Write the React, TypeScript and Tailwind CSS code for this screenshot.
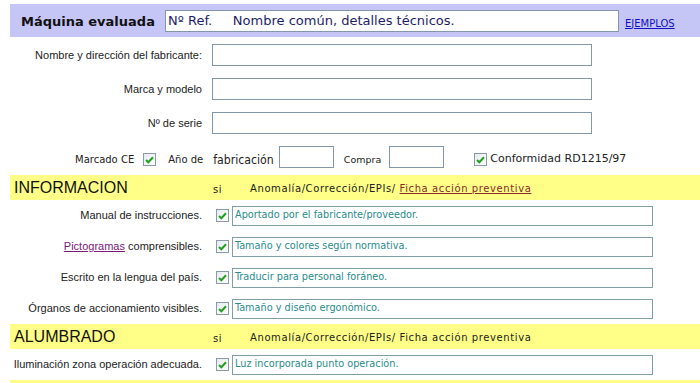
import React from 'react';

const verdana = { fontFamily: '"DejaVu Sans", Verdana, sans-serif' };

const Check: React.FC = () => (
  <span className="flex h-[13px] w-[13px] shrink-0 items-center justify-center border border-[#8a9ba6] bg-gradient-to-br from-[#e6ebee] to-white">
    <svg width="9" height="8" viewBox="0 0 9 8">
      <path d="M1 4 L3.3 6.3 L8 1.3" fill="none" stroke="#22a022" strokeWidth="2" />
    </svg>
  </span>
);

interface ItemProps {
  label: React.ReactNode;
  value: string;
}

const Item: React.FC<ItemProps> = ({ label, value }) => (
  <div className="flex h-[31px] items-center">
    <div className="w-[192px] text-right font-['Liberation_Sans',Arial,sans-serif] text-[11px] text-[#222]">
      {label}
    </div>
    <div className="ml-[14px] flex">
      <Check />
    </div>
    <div className="ml-[3px] flex h-[20px] w-[421px] items-center border border-[#7f9fa5] bg-white pl-[2px] font-['DejaVu_Sans_Condensed','DejaVu_Sans',sans-serif] text-[10.8px] text-[#2a8c8c]">
      {value}
    </div>
  </div>
);

const Band: React.FC<{ title: string; link?: boolean }> = ({ title, link }) => (
  <div className="flex h-[25px] items-center bg-[#ffff88]">
    <div className="w-[203px] pl-[4px] font-['Liberation_Sans',Arial,sans-serif] text-[16px] text-[#111]">
      {title}
    </div>
    <div className="w-[37px] pt-[3px] text-[10px] tracking-[0.5px] text-[#222]" style={verdana}>
      si
    </div>
    <div className="pt-[1px] text-[10px] tracking-[0.6px] text-[#222]" style={verdana}>
      Anomalía/Corrección/EPIs/{' '}
      {link ? (
        <span className="text-[#8a2a2a] underline">Ficha acción preventiva</span>
      ) : (
        'Ficha acción preventiva'
      )}
    </div>
  </div>
);

const Field: React.FC<{ label: string }> = ({ label }) => (
  <div className="flex h-[34px] items-center">
    <div className="w-[192px] text-right font-['Liberation_Sans',Arial,sans-serif] text-[11px] text-[#222]">
      {label}
    </div>
    <div className="ml-[10px] h-[22px] w-[380px] border border-[#8497a8] bg-white" />
  </div>
);

export default function App() {
  return (
    <div className="h-[383px] w-[700px] overflow-hidden bg-white pl-[10px] pt-[4px]">
      <div className="flex h-[33px] items-center bg-[#c6c6f6]">
        <div className="w-[155px] pl-[11px] pt-[2px] text-[13px] font-bold text-[#111]" style={verdana}>
          Máquina evaluada
        </div>
        <div className="flex h-[22px] w-[454px] items-center whitespace-pre border border-[#8497a8] bg-white pl-[2px] font-['DejaVu_Sans',sans-serif] text-[13px] text-[#1e1e66]">
          {'Nº Ref.     Nombre común, detalles técnicos.'}
        </div>
        <a className="ml-[6px] pt-[5px] text-[10px] text-[#1010c0] underline" style={verdana}>
          EJEMPLOS
        </a>
      </div>

      <div className="pt-[1px]">
        <Field label="Nombre y dirección del fabricante:" />
        <Field label="Marca y modelo" />
        <Field label="Nº de serie" />
      </div>

      <div className="flex h-[35px] items-end pb-[7px] text-[#222]">
        <span className="ml-[65px] pb-[1px] text-[10px]" style={verdana}>
          Marcado CE
        </span>
        <span className="ml-[9px] flex pb-[2px]">
          <Check />
        </span>
        <span className="ml-[12px] pb-[1px] text-[10px]" style={verdana}>
          Año de
        </span>
        <span className="ml-[10px] font-['DejaVu_Sans_Condensed','DejaVu_Sans',sans-serif] text-[12.2px] leading-[16px]">
          fabricación
        </span>
        <span className="ml-[5px] h-[22px] w-[55px] border border-[#8497a8] bg-white" />
        <span className="ml-[10px] pb-[1px] text-[9.5px]" style={verdana}>
          Compra
        </span>
        <span className="ml-[8px] h-[22px] w-[55px] border border-[#8497a8] bg-white" />
        <span className="ml-[30px] flex pb-[2px]">
          <Check />
        </span>
        <span className="ml-[3px] pb-[1px] text-[11px]" style={verdana}>
          Conformidad RD1215/97
        </span>
      </div>

      <Band title="INFORMACION" link />
      <Item label="Manual de instrucciones." value="Aportado por el fabricante/proveedor." />
      <Item
        label={
          <>
            <span className="text-[#7a1a7a] underline">Pictogramas</span> comprensibles.
          </>
        }
        value="Tamaño y colores según normativa."
      />
      <Item label="Escrito en la lengua del país." value="Traducir para personal foráneo." />
      <Item label="Órganos de accionamiento visibles." value="Tamaño y diseño ergonómico." />

      <Band title="ALUMBRADO" />
      <Item label="Iluminación zona operación adecuada." value="Luz incorporada punto operación." />
      <div className="h-[25px] bg-[#ffff88]" />
    </div>
  );
}
